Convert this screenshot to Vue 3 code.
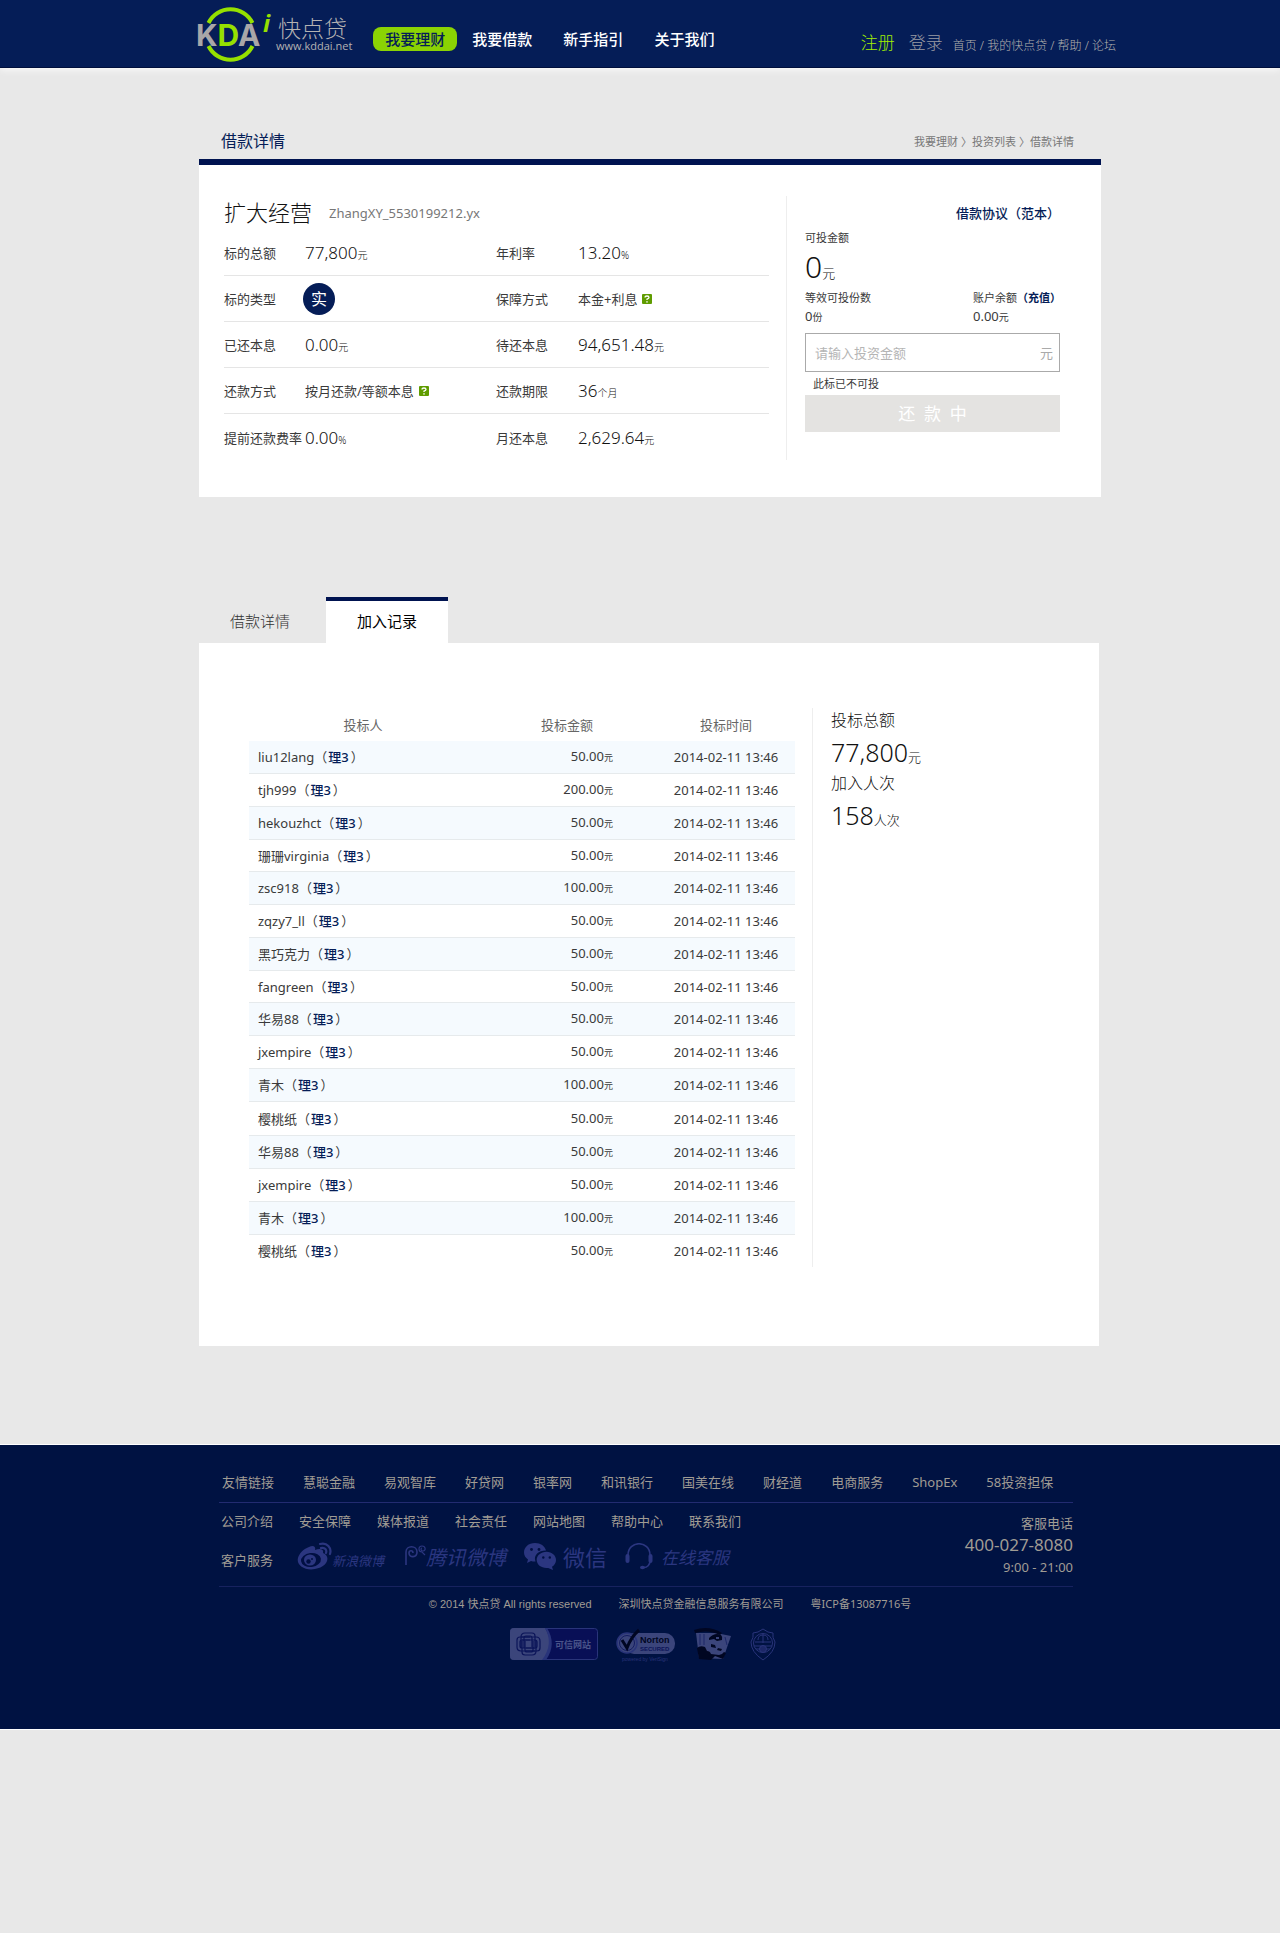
<template>
  <div class="page">
    <header class="header">
      <div class="wrap header-inner">
        <a href="#" class="logo" aria-label="快点贷">
          <svg class="logo-mark" width="78" height="56" viewBox="0 0 78 56">
            <path d="M12.500 16a24.500 24.500 0 0 1 44 0M12.500 39a24.500 24.500 0 0 0 44 0" fill="none" stroke="#96e000" stroke-width="4" />
            <text x="0" y="39" class="logo-letter">K<tspan class="green">D</tspan>A</text>
            <text x="67" y="25" class="logo-i">i</text>
          </svg>
          <span class="logo-text">
            <span class="logo-name">快点贷</span>
            <span class="logo-url">www.kddai.net</span>
          </span>
        </a>
        <nav class="nav">
          <a v-for="item in navItems" :key="item" href="#" :class="{ active: item === activeNav }" @click.prevent="activeNav = item">{{ item }}</a>
        </nav>
        <div class="user-links">
          <a href="#" class="register">注册</a>
          <a href="#" class="login">登录</a>
          <span class="small-links">
            <a href="#">首页</a> / <a href="#">我的快点贷</a> / <a href="#">帮助</a> / <a href="#">论坛</a>
          </span>
        </div>
      </div>
    </header>

    <main class="wrap">
      <div class="title-row">
        <h1>借款详情</h1>
        <div class="crumbs">
          <a href="#">我要理财</a><i>〉</i><a href="#">投资列表</a><i>〉</i><span>借款详情</span>
        </div>
      </div>

      <section class="loan-card">
        <div class="loan-info">
          <div class="loan-title">
            <h2>扩大经营</h2>
            <span>ZhangXY_5530199212.yx</span>
          </div>
          <div v-for="(row, i) in loanRows" :key="i" class="loan-row">
            <template v-for="cell in row" :key="cell.label">
              <span class="label">{{ cell.label }}</span>
              <span class="value">
                <b v-if="cell.badge" class="type-badge">{{ cell.badge }}</b>
                <template v-else-if="cell.text">
                  <span>{{ cell.text }}</span>
                  <svg class="help" width="10" height="10" viewBox="0 0 10 10">
                    <rect width="10" height="10" rx="1" fill="#5f9c00" />
                    <path d="M3 3.500Q3 2 5 2T7 3.500Q7 4.500 5 5.200V6" fill="none" stroke="#fff" stroke-width="1.300" />
                    <rect x="4.300" y="7.200" width="1.400" height="1.400" fill="#fff" />
                  </svg>
                </template>
                <span v-else class="number">{{ cell.number }}<small>{{ cell.unit }}</small></span>
              </span>
            </template>
          </div>
        </div>

        <aside class="invest">
          <a href="#" class="agreement">借款协议（范本）</a>
          <div class="invest-label">可投金额</div>
          <div class="invest-total">0<small>元</small></div>
          <div class="invest-cols">
            <span>等效可投份数</span>
            <span>账户余额<a href="#">（充值）</a></span>
            <span class="amount">0<small>份</small></span>
            <span class="amount">0.00<small>元</small></span>
          </div>
          <label class="invest-input">
            <input v-model="amount" type="text" placeholder="请输入投资金额">
            <span>元</span>
          </label>
          <div class="invest-hint">此标已不可投</div>
          <button class="invest-btn" type="button" disabled>还&nbsp;&nbsp;款&nbsp;&nbsp;中</button>
        </aside>
      </section>

      <div class="tabs">
        <button v-for="tab in tabs" :key="tab" type="button" :class="{ active: tab === activeTab }" @click="activeTab = tab">{{ tab }}</button>
      </div>

      <section class="records">
        <table class="bids">
          <thead>
            <tr>
              <th class="col-user">投标人</th>
              <th class="col-amount">投标金额</th>
              <th class="col-time">投标时间</th>
            </tr>
          </thead>
          <tbody>
            <tr v-for="(bid, i) in bids" :key="i">
              <td>{{ bid.user }}（<b>理3</b>）</td>
              <td class="bid-amount">{{ bid.amount }}<small>元</small></td>
              <td class="bid-time">2014-02-11 13:46</td>
            </tr>
          </tbody>
        </table>
        <aside class="summary">
          <div class="summary-label">投标总额</div>
          <div class="summary-value">77,800<small>元</small></div>
          <div class="summary-label">加入人次</div>
          <div class="summary-value">158<small>人次</small></div>
        </aside>
      </section>
    </main>

    <footer class="footer">
      <div class="wrap footer-inner">
        <nav class="friend-links">
          <a v-for="link in friendLinks" :key="link" href="#">{{ link }}</a>
        </nav>

        <div class="service">
          <div>
            <nav class="about-links">
              <a v-for="link in aboutLinks" :key="link" href="#">{{ link }}</a>
            </nav>
            <div class="social">
              <a href="#" class="social-title">客户服务</a>
              <a href="#" class="weibo">
                <svg width="35" height="28" viewBox="0 0 35 28" fill="none">
                  <path d="M12 5c4-2 7-1 6 3 5-2 9-1 8 3 8 3 5 14-8 16C8 29-1 23 1 16c1-4 5-9 11-11z" fill="#2b3680" />
                  <ellipse cx="14" cy="18" rx="10" ry="7" fill="#000f42" transform="rotate(-7 14 18)" />
                  <ellipse cx="13" cy="18" rx="6" ry="5.500" fill="#2b3680" />
                  <circle cx="11.500" cy="19.500" r="2.200" fill="#000f42" />
                  <circle cx="15" cy="17" r="1" fill="#000f42" />
                  <path d="M23 2c7-2 12 4 10 10M24 6c4-1 6 2 5 5" stroke="#2b3680" stroke-width="2.200" stroke-linecap="round" />
                </svg>
                <em>新浪微博</em>
              </a>
              <a href="#" class="tencent">
                <svg width="22" height="22" viewBox="0 0 22 22" fill="none" stroke="#2b3680">
                  <path d="M2 20V7C2 0 13 0 13 7c0 6-8 6-8 1 0-3 4-3 4 0" stroke-width="1.600" />
                  <path d="M21 10l-3-3c-4 0-4-6 0-6s4 5 1 5-2-3-1-3" stroke-width="1.200" />
                </svg>
                <em>腾讯微博</em>
              </a>
              <a href="#" class="wechat">
                <svg width="33" height="27" viewBox="0 0 33 27" fill="#2b3680">
                  <path d="M11 0C4.500 0 0 4.200 0 9.400c0 3 1.500 5.300 4 7L3 20l4-2c1.500.4 3 .6 4.500.5C9 12 15 7.500 22 7.600 21 3 16.500 0 11 0z" />
                  <path d="M22.500 8.800c-5.500 0-9.800 3.600-9.800 8.200 0 4.800 5 8.700 11.500 7.900L29 27l-1-3.200c2.600-1.600 4-4 4-6.800 0-4.600-4.200-8.200-9.500-8.200z" />
                  <g fill="#000f42"><circle cx="7.500" cy="6.500" r="1.400" /><circle cx="15" cy="6.500" r="1.400" /><circle cx="19.300" cy="14.500" r="1.200" /><circle cx="25.800" cy="14.500" r="1.200" /></g>
                </svg>
                <span>微信</span>
              </a>
              <a href="#" class="online">
                <svg width="28" height="27" viewBox="0 0 28 27" fill="none" stroke="#2b3680">
                  <path d="M3 12C3-3 25-3 25 12M25 18c0 4-3 6.500-6 6.500" stroke-width="1.600" />
                  <path d="M2.500 13v5M25.500 13v5" stroke-width="4" stroke-linecap="round" />
                  <ellipse cx="17.500" cy="24.500" rx="2.500" ry="1.700" fill="#2b3680" stroke="none" />
                </svg>
                <em>在线客服</em>
              </a>
            </div>
          </div>
          <div class="phone">
            <span>客服电话</span>
            <strong>400-027-8080</strong>
            <span>9:00 - 21:00</span>
          </div>
        </div>

        <div class="copyright">
          <span>© 2014 快点贷 All rights reserved</span>
          <span>深圳快点贷金融信息服务有限公司</span>
          <span class="icp">粤ICP备13087716号</span>
        </div>

        <div class="badges">
          <svg width="88" height="32" viewBox="0 0 88 32" fill="none">
            <rect x=".5" y=".5" width="87" height="31" rx="3" fill="#080f56" stroke="#29347a" />
            <path d="M4 0h31q10 16-1 32H4q-4 0-4-4V4q0-4 4-4z" fill="#3b457b" />
            <path d="M35 0h2q10 16-1 32h-4q12-16 3-32z" fill="#29347a" />
            <g stroke="#0b1458" stroke-width="1.200">
              <path d="M11 20V9q0-4 4-4h7q3 0 3 3v11M14 20V10q0-2 2-2h4q2 0 2 2v9" />
              <path d="M11 9h15q4 0 4 4v7q0 3-3 3H16M12 12h13q2 0 2 2v4q0 2-2 2h-9" />
              <path d="M26 12v11q0 4-4 4h-7q-3 0-3-3V13M23 13v9q0 2-2 2h-4q-2 0-2-2v-9" />
              <path d="M25 23H11q-4 0-4-4v-7q0-3 3-3h10M25 20H12q-2 0-2-2v-4q0-2 2-2h8" />
            </g>
            <text x="45" y="20" class="trust-text">可信网站</text>
          </svg>
          <svg width="60" height="35" viewBox="0 0 60 35" fill="none">
            <rect x="8" y="5" width="51" height="21" rx="10" fill="#3b457b" />
            <circle cx="11" cy="15" r="10" fill="#3b457b" stroke="#29347a" stroke-width="1.500" />
            <circle cx="11" cy="15" r="7.500" stroke="#131c62" />
            <path d="M6 12l5 8q4-11 12-18" stroke="#000622" stroke-width="3" />
            <text x="24" y="15" class="norton-name">Norton</text>
            <text x="24" y="23" class="norton-sub">SECURED</text>
            <text x="6" y="33" class="norton-power">powered by VeriSign</text>
          </svg>
          <svg width="38" height="33" viewBox="0 0 38 33">
            <path d="M2 5l20 0 15 3-8 23-24-1z" fill="#3b457b" />
            <path d="M0 2q15-5 28 3l-2 2Q14 1 1 5z" fill="#000622" />
            <path d="M3 20q3-3 8-1l2 4q3 0 4 3l8 1q3 0 5-3l2 1-3 6-8-3-4 4-12-1z" fill="#000622" />
            <path d="M15 10q6-6 12-3 2 2 1 5l-5 1-3-2-5 1z" fill="#000622" />
            <path d="M22 9h3v2h-3z" fill="#3b457b" />
            <path d="M17 16l4 1 1 3-5-1zM24 20l4 1-1 2-4-1z" fill="#000622" />
            <path d="M6 6v11M10 6v11M31 9l2 8" stroke="#1c2768" />
          </svg>
          <svg width="26" height="33" viewBox="0 0 26 33" fill="none" stroke="#29347a" stroke-width="1">
            <path d="M13 1q5 4 10 4-1 4 2 9 0 10-12 18Q1 24 1 14q3-5 2-9 5 0 10-4z" />
            <circle cx="13" cy="15" r="9.500" />
            <path d="M13 6v9M5 14h16M4 18h18M8 12q0-5 5-5t5 5M6 21h14" />
            <circle cx="13" cy="21" r="3.500" fill="#1c2768" />
          </svg>
        </div>
      </div>
    </footer>
  </div>
</template>

<script setup>
import { ref } from 'vue'

const navItems = ['我要理财', '我要借款', '新手指引', '关于我们']
const activeNav = ref('我要理财')

const tabs = ['借款详情', '加入记录']
const activeTab = ref('加入记录')

const amount = ref('')

const loanRows = [
  [
    { label: '标的总额', number: '77,800', unit: '元' },
    { label: '年利率', number: '13.20', unit: '%' }
  ],
  [
    { label: '标的类型', badge: '实' },
    { label: '保障方式', text: '本金+利息' }
  ],
  [
    { label: '已还本息', number: '0.00', unit: '元' },
    { label: '待还本息', number: '94,651.48', unit: '元' }
  ],
  [
    { label: '还款方式', text: '按月还款/等额本息' },
    { label: '还款期限', number: '36', unit: '个月' }
  ],
  [
    { label: '提前还款费率', number: '0.00', unit: '%' },
    { label: '月还本息', number: '2,629.64', unit: '元' }
  ]
]

const bids = [
  { user: 'liu12lang', amount: '50.00' },
  { user: 'tjh999', amount: '200.00' },
  { user: 'hekouzhct', amount: '50.00' },
  { user: '珊珊virginia', amount: '50.00' },
  { user: 'zsc918', amount: '100.00' },
  { user: 'zqzy7_ll', amount: '50.00' },
  { user: '黑巧克力', amount: '50.00' },
  { user: 'fangreen', amount: '50.00' },
  { user: '华易88', amount: '50.00' },
  { user: 'jxempire', amount: '50.00' },
  { user: '青木', amount: '100.00' },
  { user: '樱桃纸', amount: '50.00' },
  { user: '华易88', amount: '50.00' },
  { user: 'jxempire', amount: '50.00' },
  { user: '青木', amount: '100.00' },
  { user: '樱桃纸', amount: '50.00' }
]

const friendLinks = ['友情链接', '慧聪金融', '易观智库', '好贷网', '银率网', '和讯银行', '国美在线', '财经道', '电商服务', 'ShopEx', '58投资担保']
const aboutLinks = ['公司介绍', '安全保障', '媒体报道', '社会责任', '网站地图', '帮助中心', '联系我们']
</script>

<style>
body {
  margin: 0;
  background: #e8e8e8;
}
</style>

<style scoped>
.page {
  font-family: "Noto Sans", "Noto Sans CJK SC", sans-serif;
  font-size: 13px;
  font-weight: 400;
  color: #3a3a3a;
}

a {
  color: inherit;
  text-decoration: none;
}

.wrap {
  max-width: 902px;
  margin: 0 auto;
  box-sizing: border-box;
}

.header,
main,
.footer {
  padding-left: 20px;
}

main.wrap {
  max-width: 922px;
}

/* header */
.header {
  background: #051d57;
  border-bottom: 1px solid #000f3c;
  box-shadow: 0 1px 8px #ffffff;
}

.header-inner {
  display: flex;
  height: 67px;
}

.logo {
  display: flex;
  color: #b4b2b2;
}

.logo-mark {
  margin-top: 7px;
  margin-left: -3px;
  overflow: visible;
}

.logo-letter {
  font: 700 30px Inter, sans-serif;
  fill: #a9a6a8;
}

.logo-letter .green {
  fill: #96e000;
}

.logo-i {
  font: italic 700 24px "Open Sans", sans-serif;
  fill: #96e000;
}

.logo-text {
  display: flex;
  flex-direction: column;
  padding-top: 16px;
  padding-left: 2px;
}

.logo-name {
  padding-left: 2px;
  font-size: 23px;
  font-weight: 300;
  line-height: 24px;
}

.logo-url {
  font-family: "Open Sans", sans-serif;
  font-size: 11px;
  line-height: 12px;
}

.nav {
  display: flex;
  gap: 7px;
  margin-top: 27px;
  margin-left: 21px;
}

.nav a {
  height: 24px;
  padding: 0 12px;
  border-radius: 8px;
  font-size: 15px;
  font-weight: 500;
  line-height: 24px;
  white-space: nowrap;
  color: #ffffff;
}

.nav a.active {
  margin-right: -4px;
  background: #8bd303;
  color: #051d57;
}

.user-links {
  display: flex;
  gap: 14px;
  margin-top: 30px;
  margin-left: auto;
  margin-right: -15px;
  font-size: 17px;
  font-weight: 300;
  line-height: 26px;
  white-space: nowrap;
  color: #9a9ba3;
}

.register {
  color: #a2f000;
}

.small-links {
  margin-left: -4px;
  padding-top: 3px;
  font-size: 12px;
  color: #b4b2ae;
}

/* page title */
.title-row {
  display: flex;
  justify-content: space-between;
  align-items: center;
  height: 36px;
  margin-top: 55px;
  padding: 0 27px 0 22px;
}

.title-row h1 {
  margin: 0;
  padding-bottom: 2px;
  font-size: 16px;
  font-weight: 400;
  color: #051d57;
}

.crumbs {
  display: flex;
  font-size: 11px;
  color: #777777;
}

.crumbs i {
  width: 14px;
  padding-left: 3px;
  box-sizing: border-box;
  font-style: normal;
}

/* loan card */
.loan-card {
  display: flex;
  padding: 31px 41px 37px 25px;
  border-top: 6px solid #001350;
  background: #ffffff;
}

.loan-info {
  flex: 1;
  margin-right: 17px;
}

.loan-title {
  display: flex;
  align-items: center;
  gap: 17px;
  height: 34px;
  color: #777777;
}

.loan-title h2 {
  margin: 0;
  padding-bottom: 2px;
  font-size: 22px;
  font-weight: 300;
  line-height: 32px;
  color: #111111;
}

.loan-row {
  display: grid;
  grid-template-columns: 81px 191px 82px 1fr;
  align-items: center;
  box-sizing: border-box;
  height: 46px;
  border-bottom: 1px solid #e5e5e5;
}

.loan-row:last-child {
  border-bottom: none;
}

.label {
  white-space: nowrap;
}

.value {
  display: flex;
  align-items: center;
}

.number {
  font-size: 17px;
  font-weight: 300;
  color: #111111;
}

.number small {
  font-size: 10px;
}

.type-badge {
  width: 32px;
  height: 32px;
  margin-left: -2px;
  border-radius: 50%;
  background: #051d57;
  font-size: 16px;
  font-weight: 400;
  line-height: 32px;
  text-align: center;
  color: #ffffff;
}

.help {
  margin-left: 5px;
}

/* invest box */
.invest {
  width: 255px;
  padding-left: 18px;
  border-left: 1px solid #eeeeee;
  font-size: 11px;
}

.agreement {
  display: block;
  font-size: 13px;
  font-weight: 500;
  line-height: 34px;
  text-align: right;
  color: #051d57;
}

.invest-label {
  line-height: 15px;
}

.invest-total {
  height: 44px;
  font-size: 30px;
  font-weight: 300;
  line-height: 44px;
  color: #111111;
}

.invest-total small {
  font-size: 13px;
  line-height: 1;
}

.invest-cols {
  display: grid;
  grid-template-columns: 168px 1fr;
  line-height: 18px;
  white-space: nowrap;
}

.invest-cols a {
  font-weight: 700;
  color: #051d57;
}

.invest-cols .amount {
  height: 19px;
  font-size: 13px;
}

.amount small {
  font-size: 10px;
  line-height: 1;
}

.invest-input {
  display: flex;
  align-items: center;
  box-sizing: border-box;
  height: 39px;
  margin-top: 7px;
  padding: 0 6px 0 9px;
  border: 1px solid #aaaaaa;
  font-size: 13px;
  color: #aaaaaa;
}

.invest-input input {
  flex: 1;
  min-width: 0;
  padding: 0;
  border: none;
  outline: none;
  background: none;
  font: inherit;
  color: #333333;
}

.invest-input input::placeholder {
  color: #b5b5b5;
}

.invest-hint {
  padding-left: 8px;
  line-height: 23px;
}

.invest-btn {
  width: 100%;
  height: 37px;
  padding: 0 0 2px;
  border: none;
  background: #e4e3e1;
  font-family: inherit;
  font-size: 17px;
  color: #ffffff;
}

/* tabs */
.tabs {
  display: flex;
  gap: 5px;
  margin-top: 100px;
}

.tabs button {
  height: 46px;
  padding: 0 31px 3px;
  border: none;
  border-top: 4px solid transparent;
  background: none;
  font-family: inherit;
  font-size: 15px;
  font-weight: 300;
  color: #333333;
  cursor: pointer;
}

.tabs button.active {
  border-top-color: #001350;
  background: #ffffff;
  font-weight: 400;
  color: #000000;
}

/* bid records */
.records {
  display: flex;
  margin-right: 2px;
  padding: 65px 0 79px 50px;
  background: #ffffff;
}

.bids {
  flex: 1;
  margin-top: 3px;
  border-spacing: 0;
  table-layout: fixed;
}

.bids th {
  height: 30px;
  padding: 0 0 4px;
  box-sizing: border-box;
  font-weight: 400;
  color: #666666;
}

.col-user {
  width: 228px;
}

.col-amount {
  width: 180px;
}

.bids td {
  box-sizing: border-box;
  height: 33px;
  padding: 0;
  border-bottom: 1px solid #e6eaec;
  line-height: 20px;
}

.bids tr:nth-child(4n) td {
  height: 32px;
}

.bids tr:nth-child(12) td {
  height: 34px;
}

.bids tr:last-child td {
  border-bottom: none;
}

.bids tbody tr:nth-child(odd) {
  background: #f5fafe;
}

.bids td:first-child {
  padding-left: 9px;
}

.bids b {
  margin: 0 2px 0 1px;
  font-weight: 500;
  color: #051d57;
}

.bids small {
  font-size: 9px;
}

.bids .bid-amount {
  padding-right: 44px;
  text-align: right;
}

.bids .bid-time {
  text-align: center;
}

.summary {
  width: 268px;
  margin-left: 17px;
  padding-left: 18px;
  border-left: 1px solid #eeeeee;
}

.summary-label {
  font-size: 16px;
  font-weight: 300;
  line-height: 25px;
  color: #111111;
}

.summary-value {
  height: 38px;
  font-size: 25px;
  font-weight: 300;
  line-height: 38px;
  color: #111111;
}

.summary-value small {
  font-size: 13px;
  line-height: 1;
}

/* footer */
.footer {
  margin-top: 98px;
  padding-bottom: 66px;
  border-top: 1px solid #ffffff;
  border-bottom: 1px solid #ffffff;
  background: #001242;
  color: #a09c94;
}

.footer-inner {
  padding: 18px 28px 0 20px;
}

.friend-links {
  display: flex;
  gap: 29px;
  padding-left: 3px;
  border-bottom: 1px solid #222b70;
  line-height: 39px;
  white-space: nowrap;
}

.service {
  display: flex;
  justify-content: space-between;
  height: 83px;
  border-bottom: 1px solid #17225f;
}

.about-links {
  display: flex;
  gap: 26px;
  padding-left: 2px;
  line-height: 37px;
  white-space: nowrap;
}

.social {
  display: flex;
  align-items: center;
  height: 32px;
  padding-left: 2px;
  white-space: nowrap;
  color: #2b3680;
}

.social a {
  display: flex;
  align-items: center;
}

.social .social-title {
  padding-top: 6px;
  color: #a09c94;
}

.weibo {
  margin-left: 24px;
}

.weibo em {
  padding-top: 8px;
}

.tencent {
  margin-left: 20px;
}

.tencent em {
  font-size: 20px;
}

.wechat {
  gap: 6px;
  margin-left: 18px;
  font-size: 22px;
}

.online {
  gap: 8px;
  margin-left: 18px;
  font-size: 17px;
}

.phone {
  display: flex;
  flex-direction: column;
  padding-top: 10px;
  line-height: 20px;
  text-align: right;
}

.phone strong {
  font-size: 17px;
  font-weight: 400;
  line-height: 24px;
}

.copyright {
  display: flex;
  justify-content: center;
  gap: 27px;
  padding-left: 48px;
  font-family: "Liberation Sans", "Noto Sans CJK SC", sans-serif;
  font-size: 11px;
  line-height: 34px;
  white-space: nowrap;
}

.icp {
  font-family: "Noto Sans", "Noto Sans CJK SC", sans-serif;
}

.badges {
  display: flex;
  justify-content: center;
  gap: 18px;
  margin-top: 7px;
  padding-right: 7px;
}

.trust-text {
  font: 700 9px "Noto Sans CJK SC", sans-serif;
  fill: #4a548a;
}

.norton-name {
  font: 700 9px "Liberation Sans", sans-serif;
  fill: #000622;
}

.norton-sub {
  font: 700 6px "Liberation Sans", sans-serif;
  fill: #0b1458;
}

.norton-power {
  font: 5px "Liberation Sans", sans-serif;
  fill: #29347a;
}
</style>
